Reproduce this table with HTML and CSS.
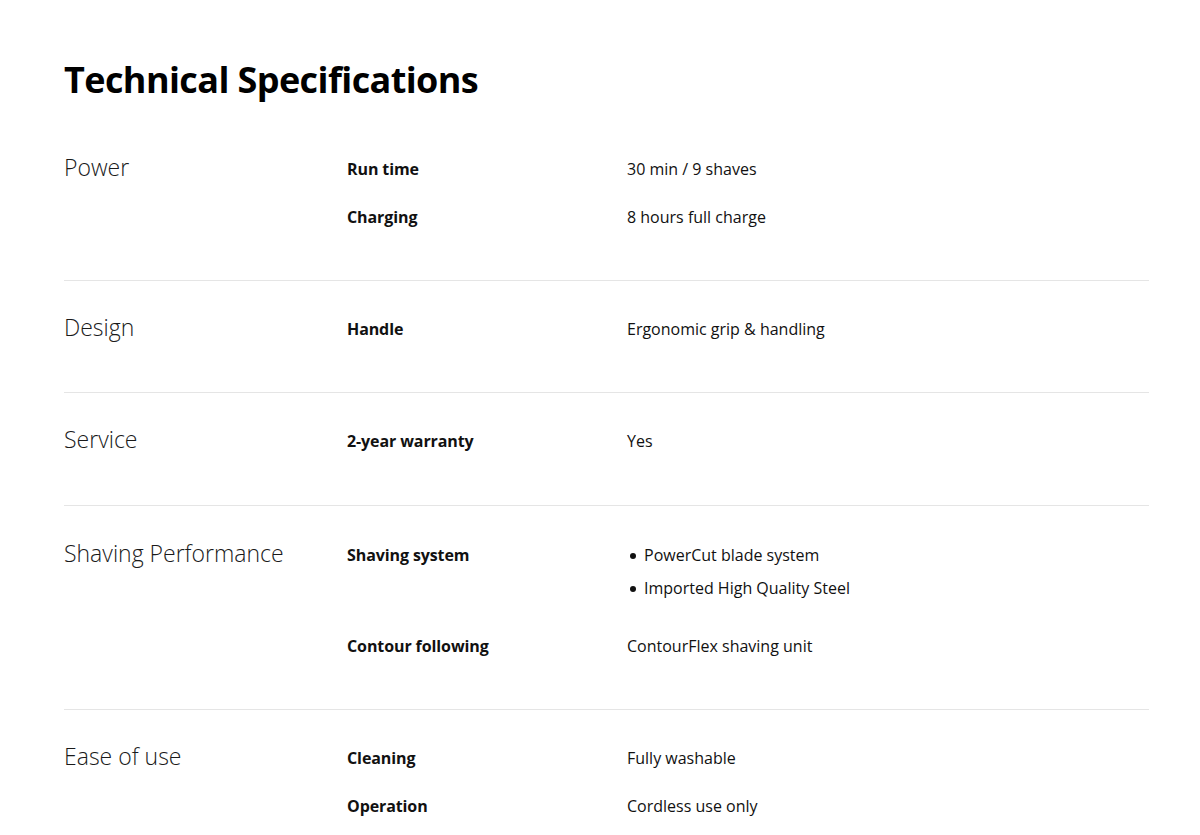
FILE: index.html
```html
<!DOCTYPE html>
<html lang="en">
<head>
<meta charset="utf-8">
<title>Technical Specifications</title>
<link rel="stylesheet" href="styles.css">
</head>
<body>
<main class="specs">
  <h1 class="specs__title">Technical Specifications</h1>

  <section class="group">
    <h2 class="group__name">Power</h2>
    <dl class="group__items">
      <div class="item"><dt class="item__label">Run time</dt><dd class="item__value">30 min / 9 shaves</dd></div>
      <div class="item"><dt class="item__label">Charging</dt><dd class="item__value">8 hours full charge</dd></div>
    </dl>
  </section>

  <section class="group">
    <h2 class="group__name">Design</h2>
    <dl class="group__items">
      <div class="item"><dt class="item__label">Handle</dt><dd class="item__value">Ergonomic grip &amp; handling</dd></div>
    </dl>
  </section>

  <section class="group group--tall">
    <h2 class="group__name">Service</h2>
    <dl class="group__items">
      <div class="item"><dt class="item__label">2-year warranty</dt><dd class="item__value">Yes</dd></div>
    </dl>
  </section>

  <section class="group group--shave">
    <h2 class="group__name">Shaving Performance</h2>
    <dl class="group__items">
      <div class="item"><dt class="item__label">Shaving system</dt>
        <dd class="item__value">
          <ul class="bullets">
            <li class="bullets__item">PowerCut blade system</li>
            <li class="bullets__item">Imported High Quality Steel</li>
          </ul>
        </dd>
      </div>
      <div class="item"><dt class="item__label">Contour following</dt><dd class="item__value">ContourFlex shaving unit</dd></div>
    </dl>
  </section>

  <section class="group">
    <h2 class="group__name">Ease of use</h2>
    <dl class="group__items">
      <div class="item"><dt class="item__label">Cleaning</dt><dd class="item__value">Fully washable</dd></div>
      <div class="item"><dt class="item__label">Operation</dt><dd class="item__value">Cordless use only</dd></div>
    </dl>
  </section>
</main>
</body>
</html>
```

FILE: styles.css
```css
* { box-sizing: border-box; }

html, body {
  margin: 0;
  padding: 0;
  background: #ffffff;
}

body {
  font-family: "Open Sans", "Noto Sans", "Liberation Sans", sans-serif;
  color: #111111;
}

.specs {
  width: 1085px;
  margin-left: 64px;
}

.specs__title {
  margin: 0;
  padding-top: 58px;
  padding-bottom: 19px;
  font-size: 36px;
  line-height: 44px;
  font-weight: 700;
  letter-spacing: -0.6px;
  color: #000000;
}

.group {
  display: grid;
  grid-template-columns: 283px 1fr;
  padding: 36px 0 51px;
  border-bottom: 1px solid #e5e5e5;
}

.group--tall {
  padding-bottom: 52px;
}

.group--shave {
  padding-top: 37px;
}

.group:last-child {
  border-bottom: none;
}

.group__name {
  margin: 0;
  font-size: 23px;
  line-height: 20px;
  font-weight: 350;
  color: #1a1a1a;
}

.group__items {
  margin: 0;
  display: flex;
  flex-direction: column;
  gap: 24px;
}

.item {
  display: grid;
  grid-template-columns: 280px 1fr;
}

.item__label {
  font-size: 16px;
  line-height: 24px;
  font-weight: 700;
  letter-spacing: -0.1px;
  color: #111111;
}

.item__value {
  margin: 0;
  font-size: 16px;
  line-height: 24px;
  font-weight: 400;
  color: #111111;
}

.bullets {
  list-style: none;
  margin: 0 0 10px;
  padding: 0;
  display: flex;
  flex-direction: column;
  gap: 9px;
}

.bullets__item {
  position: relative;
  padding-left: 17px;
}

.bullets__item::before {
  content: "";
  position: absolute;
  left: 3px;
  top: 10px;
  width: 6px;
  height: 6px;
  border-radius: 50%;
  background: #111111;
}
```
